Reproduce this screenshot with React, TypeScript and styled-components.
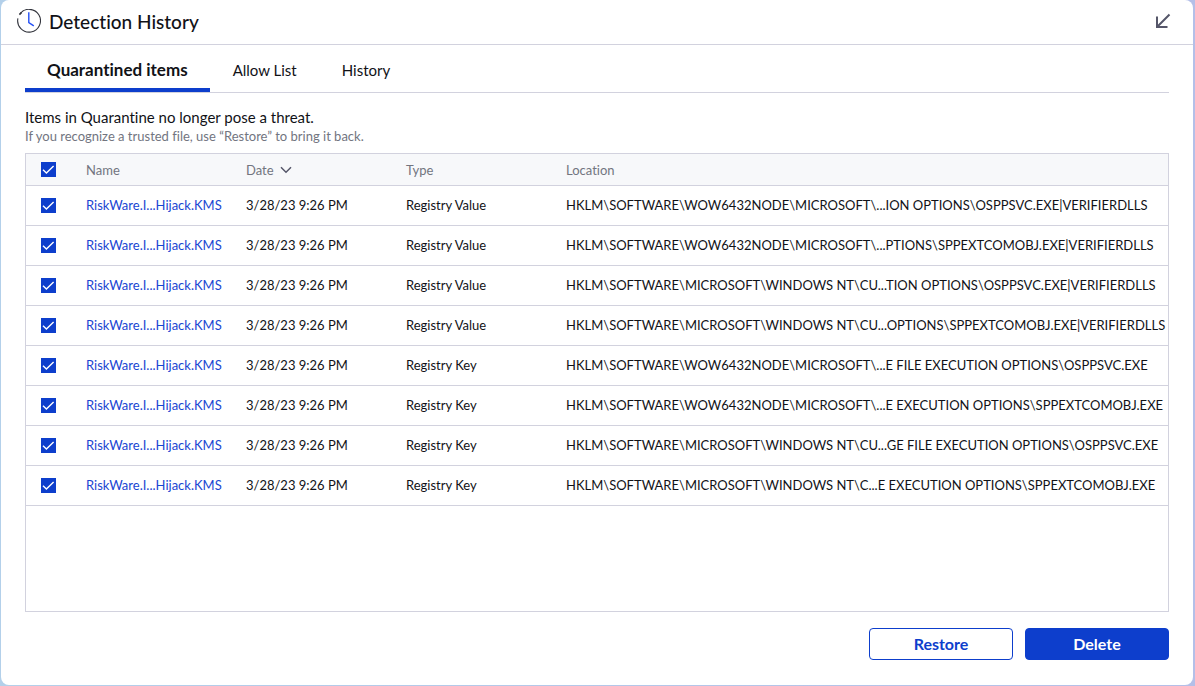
import React, { useState } from "react";
import styled, { createGlobalStyle } from "styled-components";

const blue = "#0d3ecc";
const line = "#d2d2de";
const ink = "#111217";
const muted = "#72757f";

const GlobalStyle = createGlobalStyle`
  *, *::before, *::after { box-sizing: border-box; }
  body {
    margin: 0;
    font-family: Lato, "Liberation Sans", sans-serif;
    font-size: 13px;
    line-height: 20px;
    font-variant-ligatures: none;
    color: ${ink};
    background: linear-gradient(90deg, #b3d0ea, #b4bfe8);
  }
  button { font: inherit; font-variant-ligatures: none; cursor: pointer; }
`;

const Page = styled.div`
  display: flex;
  min-height: 100vh;
  padding: 0 2px 1px 1px;
`;

const Window = styled.main`
  flex: 1;
  min-width: 0;
  display: flex;
  flex-direction: column;
  background: #fff;
  border-radius: 8px;
`;

const Header = styled.header`
  display: flex;
  align-items: center;
  gap: 8px;
  height: 45px;
  padding: 0 22px 2px 16px;
  border-bottom: 1px solid ${line};
`;

const Title = styled.h1`
  flex: 1;
  margin: 0;
  padding-top: 2px;
  font-size: 19px;
  line-height: 24px;
  font-weight: 500;
`;

const IconButton = styled.button`
  display: flex;
  padding: 0;
  border: 0;
  background: none;
`;

const Content = styled.div`
  flex: 1;
  display: flex;
  flex-direction: column;
  padding: 0 24px 25px;
`;

const Tabs = styled.div`
  display: flex;
  gap: 1px;
  height: 48px;
  border-bottom: 1px solid ${line};
`;

const Tab = styled.button<{ $active: boolean }>`
  height: 47px;
  padding: 7px 22px 0;
  border: 0;
  border-bottom: 4px solid ${(p) => (p.$active ? blue : "transparent")};
  background: none;
  color: ${ink};
  font-size: ${(p) => (p.$active ? 17 : 15)}px;
  font-weight: ${(p) => (p.$active ? 700 : 400)};
`;

const Intro = styled.div`
  padding: 14px 0 8px;
`;

const Lead = styled.p`
  margin: 0;
  font-size: 15px;
`;

const Hint = styled.p`
  margin: 0;
  line-height: 18px;
  color: ${muted};
`;

const TablePanel = styled.div`
  flex: 1;
  border: 1px solid ${line};
`;

const Table = styled.table`
  width: 100%;
  table-layout: fixed;
  border-collapse: separate;
  border-spacing: 0;
`;

const CheckCol = styled.col`
  width: 60px;
`;

const DataCol = styled.col`
  width: 160px;
`;

const HeadCell = styled.th`
  height: 32px;
  padding: 0;
  border-bottom: 1px solid ${line};
  background: #f7f8fa;
  color: ${muted};
  font-weight: 400;
  text-align: left;
`;

const CheckCell = styled.td`
  height: 40px;
  padding: 0;
  border-bottom: 1px solid ${line};
`;

const Cell = styled(CheckCell)`
  padding-bottom: 2px;
  white-space: nowrap;
`;

const SortButton = styled.button`
  display: flex;
  align-items: center;
  gap: 6px;
  padding: 0;
  border: 0;
  background: none;
  color: inherit;
`;

const ItemLink = styled.a`
  color: #1a46d2;
  text-decoration: none;
`;

const CheckBox = styled.label`
  display: grid;
  width: 15px;
  height: 15px;
  margin-left: 15px;

  input, svg { grid-area: 1 / 1; margin: 0; }
  input {
    appearance: none;
    width: 15px;
    height: 15px;
    border: 1px solid ${blue};
    background: #fff;
  }
  input:checked { background: ${blue}; }
  svg { pointer-events: none; z-index: 1; }
`;

const Actions = styled.div`
  display: flex;
  justify-content: flex-end;
  gap: 12px;
  padding-top: 16px;
`;

const ActionButton = styled.button<{ $primary?: boolean }>`
  width: 144px;
  height: 32px;
  padding: 0;
  border: 1px solid ${blue};
  border-radius: 4px;
  background: ${(p) => (p.$primary ? blue : "#fff")};
  color: ${(p) => (p.$primary ? "#fff" : blue)};
  font-size: 16px;
  font-weight: 700;
`;

const tabs = ["Quarantined items", "Allow List", "History"];

const rows = [
  ["Registry Value", "HKLM\\SOFTWARE\\WOW6432NODE\\MICROSOFT\\...ION OPTIONS\\OSPPSVC.EXE|VERIFIERDLLS"],
  ["Registry Value", "HKLM\\SOFTWARE\\WOW6432NODE\\MICROSOFT\\...PTIONS\\SPPEXTCOMOBJ.EXE|VERIFIERDLLS"],
  ["Registry Value", "HKLM\\SOFTWARE\\MICROSOFT\\WINDOWS NT\\CU...TION OPTIONS\\OSPPSVC.EXE|VERIFIERDLLS"],
  ["Registry Value", "HKLM\\SOFTWARE\\MICROSOFT\\WINDOWS NT\\CU...OPTIONS\\SPPEXTCOMOBJ.EXE|VERIFIERDLLS"],
  ["Registry Key", "HKLM\\SOFTWARE\\WOW6432NODE\\MICROSOFT\\...E FILE EXECUTION OPTIONS\\OSPPSVC.EXE"],
  ["Registry Key", "HKLM\\SOFTWARE\\WOW6432NODE\\MICROSOFT\\...E EXECUTION OPTIONS\\SPPEXTCOMOBJ.EXE"],
  ["Registry Key", "HKLM\\SOFTWARE\\MICROSOFT\\WINDOWS NT\\CU...GE FILE EXECUTION OPTIONS\\OSPPSVC.EXE"],
  ["Registry Key", "HKLM\\SOFTWARE\\MICROSOFT\\WINDOWS NT\\C...E EXECUTION OPTIONS\\SPPEXTCOMOBJ.EXE"],
];

function Check({ label, checked, onChange }: { label: string; checked: boolean; onChange: () => void }) {
  return (
    <CheckBox>
      <input type="checkbox" aria-label={label} checked={checked} onChange={onChange} />
      {checked && (
        <svg width="15" height="15" viewBox="0 0 15 15" fill="none" stroke="#fff" strokeWidth="1.4">
          <path d="M2 7.8 5.4 11 12.6 4" />
        </svg>
      )}
    </CheckBox>
  );
}

export default function App() {
  const [tab, setTab] = useState(0);
  const [selected, setSelected] = useState<boolean[]>(rows.map(() => true));
  const all = selected.every(Boolean);

  return (
    <Page>
      <GlobalStyle />
      <Window>
        <Header>
          <svg width="24" height="24" viewBox="0 0 24 24" fill="none" aria-hidden="true">
            <path d="M3 4.8A11.4 11.4 0 1 1 .9 9.4" stroke="#33353d" strokeWidth="1.1" />
            <path d="M2.4 5.6 4.6 3.4" stroke="#33353d" strokeWidth="1.5" />
            <path d="M11.8 3.2V13.6L16.8 16.8" stroke="#2450f5" strokeWidth="1.4" />
          </svg>
          <Title>Detection History</Title>
          <IconButton type="button" aria-label="Collapse">
            <svg width="16" height="16" viewBox="0 0 16 16" fill="none" stroke="#555669" strokeWidth="2">
              <path d="M2 3.5V14H12.5M2.5 13.5 14.5 1.5" />
            </svg>
          </IconButton>
        </Header>
        <Content>
          <Tabs role="tablist">
            {tabs.map((name, i) => (
              <Tab key={name} type="button" role="tab" aria-selected={tab === i} $active={tab === i} onClick={() => setTab(i)}>
                {name}
              </Tab>
            ))}
          </Tabs>
          <Intro>
            <Lead>Items in Quarantine no longer pose a threat.</Lead>
            <Hint>If you recognize a trusted file, use “Restore” to bring it back.</Hint>
          </Intro>
          <TablePanel>
            <Table>
              <colgroup>
                <CheckCol />
                <DataCol />
                <DataCol />
                <DataCol />
                <col />
              </colgroup>
              <thead>
                <tr>
                  <HeadCell>
                    <Check label="Select all" checked={all} onChange={() => setSelected(rows.map(() => !all))} />
                  </HeadCell>
                  <HeadCell>Name</HeadCell>
                  <HeadCell>
                    <SortButton type="button">
                      Date
                      <svg width="12" height="8" viewBox="0 0 12 8" fill="none" stroke="#555669" strokeWidth="1.5">
                        <path d="M1 1.2 6 6.2 11 1.2" />
                      </svg>
                    </SortButton>
                  </HeadCell>
                  <HeadCell>Type</HeadCell>
                  <HeadCell>Location</HeadCell>
                </tr>
              </thead>
              <tbody>
                {rows.map(([type, location], i) => (
                  <tr key={location}>
                    <CheckCell>
                      <Check
                        label={`Select item ${i + 1}`}
                        checked={selected[i]}
                        onChange={() => setSelected(selected.map((s, j) => (j === i ? !s : s)))}
                      />
                    </CheckCell>
                    <Cell>
                      <ItemLink href="#item">RiskWare.I...Hijack.KMS</ItemLink>
                    </Cell>
                    <Cell>3/28/23 9:26 PM</Cell>
                    <Cell>{type}</Cell>
                    <Cell>{location}</Cell>
                  </tr>
                ))}
              </tbody>
            </Table>
          </TablePanel>
          <Actions>
            <ActionButton type="button">Restore</ActionButton>
            <ActionButton type="button" $primary>
              Delete
            </ActionButton>
          </Actions>
        </Content>
      </Window>
    </Page>
  );
}
